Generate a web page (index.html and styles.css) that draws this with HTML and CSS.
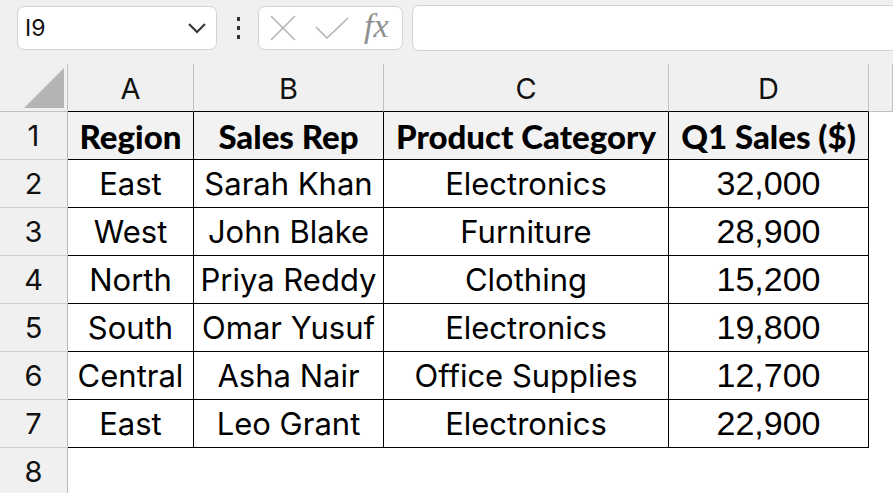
FILE: index.html
```html
<!DOCTYPE html>
<html>
<head>
    <title>Sales Sheet</title>
    <link rel="stylesheet" href="styles.css">
</head>
<body>
    <div class="toolbar">
        <div class="name-box">
            <span class="cell-ref">I9</span>
            <svg class="chevron" width="20" height="12" viewBox="0 0 20 12">
                <path d="M2 2 L10 10 L18 2" fill="none" stroke="#333" stroke-width="2"/>
            </svg>
        </div>
        <div class="dots"><i></i><i></i><i></i></div>
        <div class="fx-buttons">
            <svg width="26" height="26" viewBox="0 0 26 26">
                <path d="M1 1 L25 25 M25 1 L1 25" stroke="#b4b4b4" stroke-width="1.6"/>
            </svg>
            <svg width="34" height="22" viewBox="0 0 34 22">
                <path d="M1 10 L12 21 L33 1" fill="none" stroke="#b4b4b4" stroke-width="1.6"/>
            </svg>
            <span class="fx">fx</span>
        </div>
        <div class="formula-input"></div>
    </div>

    <div class="sheet">
        <div class="corner"><div class="triangle"></div></div>
        <div class="col-head top">A</div>
        <div class="col-head top">B</div>
        <div class="col-head top">C</div>
        <div class="col-head top">D</div>
        <div class="col-head"></div>

        <div class="row-head">1</div>
        <div class="cell title">Region</div>
        <div class="cell title">Sales Rep</div>
        <div class="cell title">Product Category</div>
        <div class="cell title">Q1 Sales ($)</div>
        <div class="blank"></div>

        <div class="row-head">2</div>
        <div class="cell">East</div>
        <div class="cell">Sarah Khan</div>
        <div class="cell">Electronics</div>
        <div class="cell num">32,000</div>
        <div class="blank"></div>

        <div class="row-head">3</div>
        <div class="cell">West</div>
        <div class="cell">John Blake</div>
        <div class="cell">Furniture</div>
        <div class="cell num">28,900</div>
        <div class="blank"></div>

        <div class="row-head">4</div>
        <div class="cell">North</div>
        <div class="cell">Priya Reddy</div>
        <div class="cell">Clothing</div>
        <div class="cell num">15,200</div>
        <div class="blank"></div>

        <div class="row-head">5</div>
        <div class="cell">South</div>
        <div class="cell">Omar Yusuf</div>
        <div class="cell">Electronics</div>
        <div class="cell num">19,800</div>
        <div class="blank"></div>

        <div class="row-head">6</div>
        <div class="cell">Central</div>
        <div class="cell">Asha Nair</div>
        <div class="cell">Office Supplies</div>
        <div class="cell num">12,700</div>
        <div class="blank"></div>

        <div class="row-head">7</div>
        <div class="cell">East</div>
        <div class="cell">Leo Grant</div>
        <div class="cell">Electronics</div>
        <div class="cell num">22,900</div>
        <div class="blank"></div>

        <div class="row-head">8</div>
        <div class="blank"></div>
        <div class="blank"></div>
        <div class="blank"></div>
        <div class="blank"></div>
        <div class="blank"></div>
    </div>
</body>
</html>
```

FILE: styles.css
```css
body {
    margin: 0;
    background-color: #f0f0f0;
    font-family: "Inter", "Liberation Sans", sans-serif;
    overflow: hidden;
}

.toolbar {
    display: flex;
    align-items: center;
    height: 64px;
    padding: 0 0 8px 17px;
    box-sizing: border-box;
}

.name-box {
    width: 200px;
    height: 44px;
    box-sizing: border-box;
    background: #fff;
    border: 1px solid #d2d2d2;
    border-radius: 7px;
    display: flex;
    align-items: center;
    justify-content: space-between;
    padding: 0 9px 0 7px;
}

.cell-ref {
    font-size: 23px;
    color: #111;
}

.dots {
    display: flex;
    flex-direction: column;
    gap: 5px;
    margin: 0 18px 0 20px;
}

.dots i {
    display: block;
    width: 3px;
    height: 4px;
    background: #333;
}

.fx-buttons {
    width: 145px;
    height: 44px;
    box-sizing: border-box;
    background: #fff;
    border: 1px solid #d2d2d2;
    border-radius: 7px;
    display: flex;
    align-items: center;
    padding: 0 8px 0 11px;
    gap: 19px;
}

.fx {
    font-family: "Liberation Serif", serif;
    font-style: italic;
    font-size: 34px;
    color: #8f8f8f;
    margin-left: -4px;
    margin-top: -4px;
}

.formula-input {
    flex: 1;
    height: 44px;
    margin-left: 9px;
    margin-right: -10px;
    background: #fff;
    border: 1px solid #d2d2d2;
    border-radius: 7px;
}

.sheet {
    display: grid;
    grid-template-columns: 68px 126px 190px 285px 200px 1fr;
    grid-auto-rows: 48px;
}

.sheet > div {
    box-sizing: border-box;
    display: flex;
    align-items: center;
    justify-content: center;
}

.corner {
    border-right: 1px solid #c0c0c0;
    border-bottom: 1px solid #c0c0c0;
    align-items: flex-end !important;
    justify-content: flex-end !important;
    padding: 0 3px 3px 0;
}

.triangle {
    width: 0;
    height: 0;
    border-left: 40px solid transparent;
    border-bottom: 40px solid #b4b4b4;
}

.col-head {
    border-right: 1px solid #c0c0c0;
    border-bottom: 1px solid #c0c0c0;
    font-size: 29px;
    color: #111;
    padding-top: 2px;
}

.col-head.top {
    border-bottom-color: #000;
}

.row-head {
    background: #f0f0f0;
    border-right: 1px solid #b8b8b8;
    border-bottom: 1px solid #d0d0d0;
    font-size: 29px;
    color: #111;
}

.cell {
    background: #fff;
    border-right: 1px solid #000;
    border-bottom: 1px solid #000;
    font-size: 31px;
    color: #000;
    white-space: nowrap;
}

.cell.title {
    background: #f2f2f2;
    font-family: "Lato", "Liberation Sans", sans-serif;
    font-weight: 900;
    font-size: 33px;
}

.cell.num {
    font-family: "Liberation Sans", Arial, sans-serif;
    font-size: 34px;
}

.blank {
    background: #fff;
}
```
